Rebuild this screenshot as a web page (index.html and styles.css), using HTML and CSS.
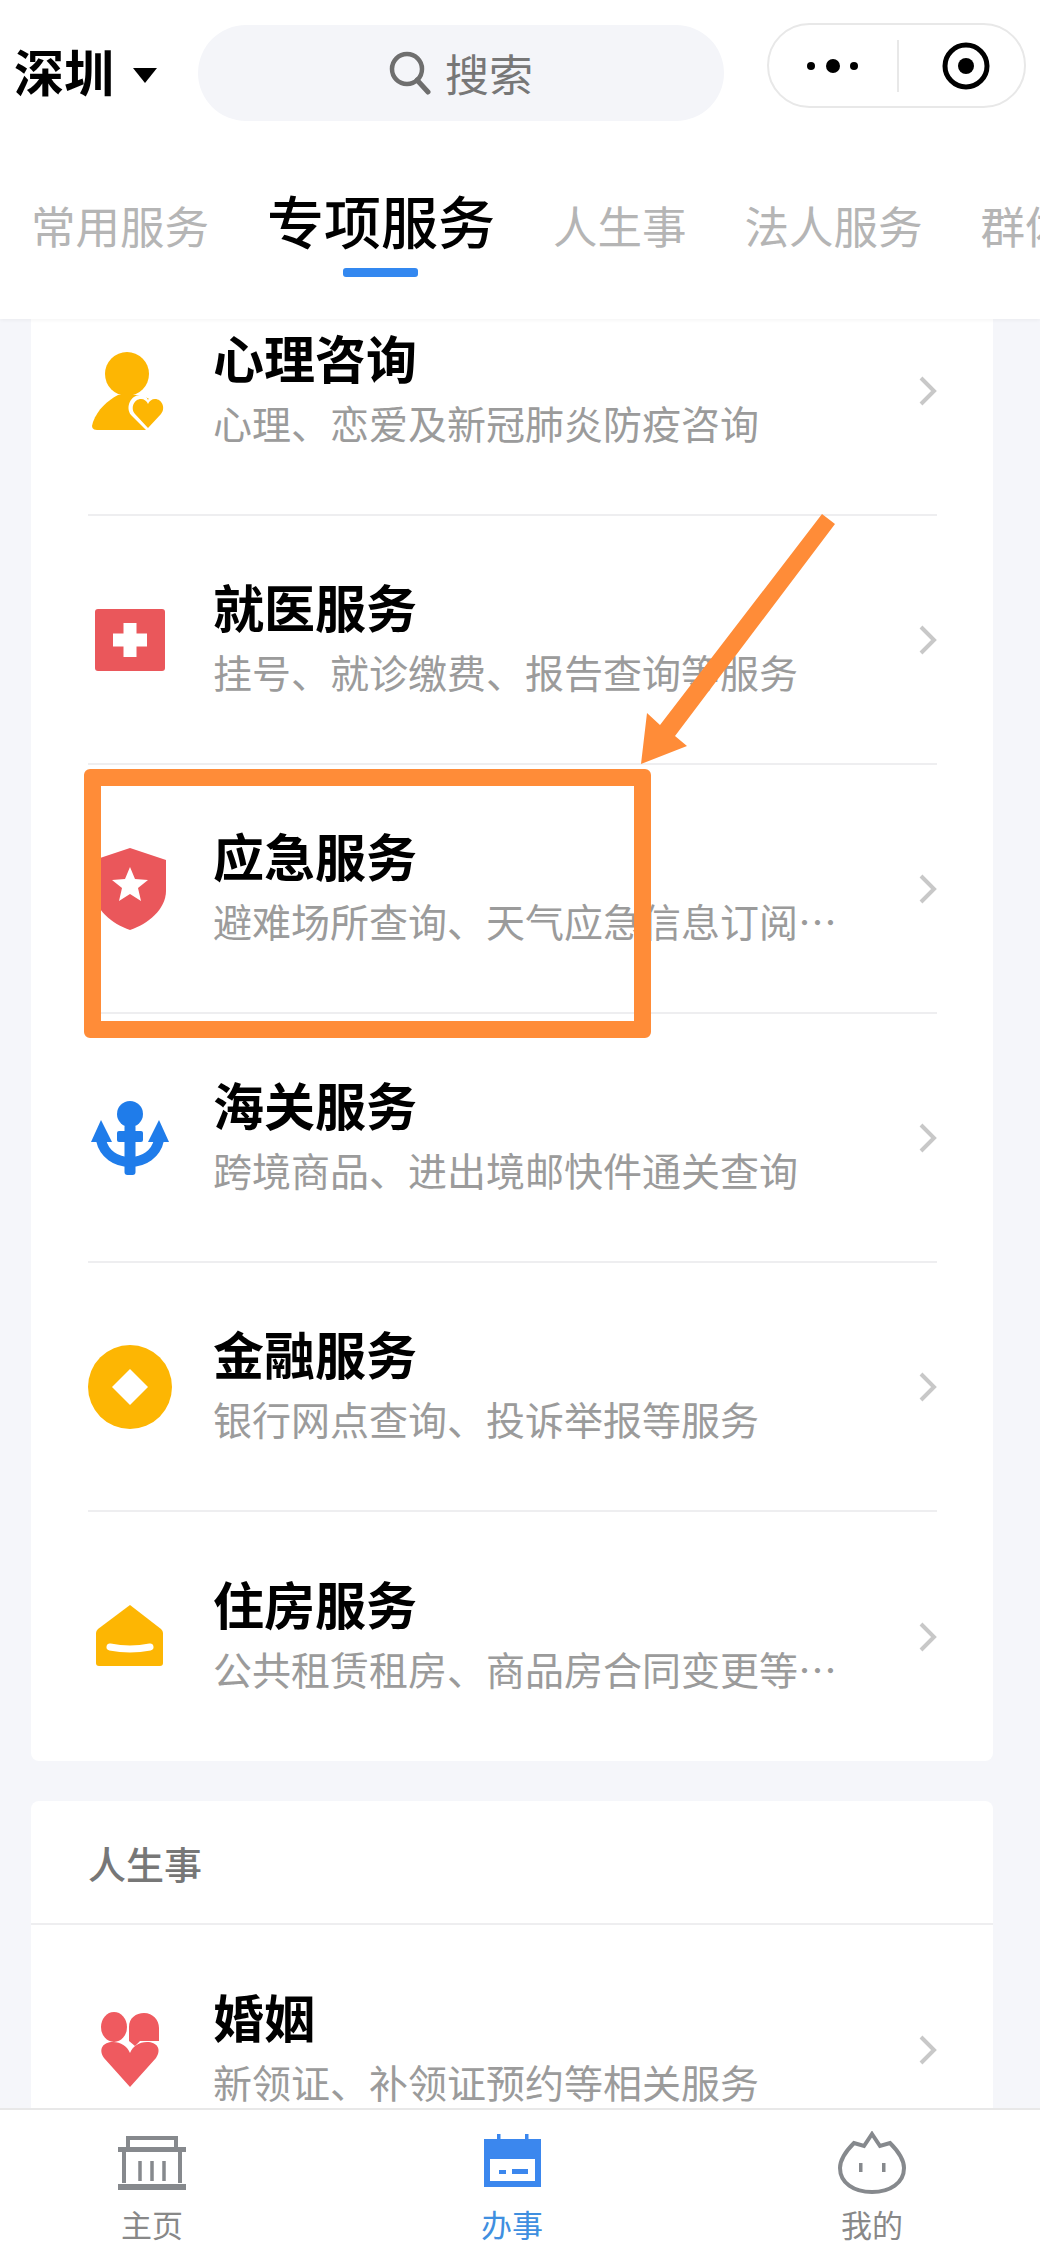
FILE: index.html
```html
<!DOCTYPE html>
<html lang="zh-CN">
<head>
  <meta charset="UTF-8" />
  <title>办事</title>
  <link rel="stylesheet" href="styles.css">
</head>
<body>
  <div class="page">
    <header class="header">
      <div class="top-row">
        <div class="city">深圳<span class="city-arrow"></span></div>
        <div class="search">
          <svg class="search-icon" viewBox="0 0 44 44" width="44" height="44">
            <circle cx="18" cy="18" r="15" fill="none" stroke="#6e6e6e" stroke-width="4.5"/>
            <line x1="28" y1="29" x2="39" y2="41" stroke="#6e6e6e" stroke-width="5" stroke-linecap="round"/>
          </svg>
          <span>搜索</span>
        </div>
        <div class="capsule">
          <svg class="capsule-dots" viewBox="0 0 56 16" width="56" height="16">
            <circle cx="6" cy="8" r="4"/>
            <circle cx="28" cy="8" r="7"/>
            <circle cx="49" cy="8" r="4"/>
          </svg>
          <span class="capsule-line"></span>
          <svg class="capsule-target" viewBox="0 0 48 48" width="48" height="48">
            <circle cx="24" cy="24" r="21" fill="none" stroke="#000" stroke-width="5"/>
            <circle cx="24" cy="24" r="8"/>
          </svg>
        </div>
      </div>
      <nav class="tabs">
        <span class="tab">常用服务</span>
        <span class="tab tab-active">专项服务</span>
        <span class="tab">人生事</span>
        <span class="tab">法人服务</span>
        <span class="tab">群体服务</span>
      </nav>
    </header>

    <main class="content">
      <section class="card card-first">
        <div class="row">
          <svg class="row-icon" viewBox="0 0 84 84">
            <circle cx="39" cy="25" r="22" fill="#fdb603"/>
            <path d="M9 81 Q2 81 5 73 C10 60 19 52 30 46 L50 46 C58 48 66 50 70 60 L58 81 Z" fill="#fdb603"/>
            <path d="M60 83 L43 66 C37 58 43 46 52 46 C56 46 59 48 60 51 C61 48 65 46 68 46 C77 46 83 58 77 66 Z" fill="#fff"/>
            <path d="M60 79 L47 65 C42 59 46 50 53 50 C56 50 59 52 60 55 C61 52 64 50 67 50 C74 50 78 59 73 65 Z" fill="#fdb603"/>
          </svg>
          <div class="row-text">
            <div class="row-title">心理咨询</div>
            <div class="row-sub">心理、恋爱及新冠肺炎防疫咨询</div>
          </div>
          <svg class="chevron" viewBox="0 0 18 30"><polyline points="2,2 15,15 2,28"/></svg>
        </div>
        <div class="row">
          <svg class="row-icon" viewBox="0 0 84 84">
            <rect x="7" y="11" width="70" height="62" rx="3" fill="#ea575b"/>
            <path d="M35.500 25 h13 v10.500 h10.500 v13 h-10.500 v10.500 h-13 v-10.500 h-10.500 v-13 h10.500 Z" fill="#fff"/>
          </svg>
          <div class="row-text">
            <div class="row-title">就医服务</div>
            <div class="row-sub">挂号、就诊缴费、报告查询等服务</div>
          </div>
          <svg class="chevron" viewBox="0 0 18 30"><polyline points="2,2 15,15 2,28"/></svg>
        </div>
        <div class="row">
          <svg class="row-icon" viewBox="0 0 84 84">
            <path d="M42 1 L78 13 V44 C78 62 60 77 42 83 C24 77 6 62 6 44 V13 Z" fill="#ea575b"/>
            <polygon points="42,20 47,32 60,33 50,41 53,54 42,47 31,54 34,41 24,33 37,32" fill="#fff"/>
          </svg>
          <div class="row-text">
            <div class="row-title">应急服务</div>
            <div class="row-sub">避难场所查询、天气应急信息订阅…</div>
          </div>
          <svg class="chevron" viewBox="0 0 18 30"><polyline points="2,2 15,15 2,28"/></svg>
        </div>
        <div class="row">
          <svg class="row-icon" viewBox="0 0 84 84">
            <circle cx="42" cy="18" r="13" fill="#1f7cea"/>
            <rect x="29" y="35" width="26" height="11" rx="2" fill="#1f7cea"/>
            <rect x="36.500" y="28" width="11" height="51" rx="3" fill="#1f7cea"/>
            <polygon points="13,24 24,46 3,46" fill="#1f7cea"/>
            <polygon points="71,24 81,46 60,46" fill="#1f7cea"/>
            <path d="M13 44 C16 58 28 66 42 66 C56 66 68 58 71 44" fill="none" stroke="#1f7cea" stroke-width="10"/>
          </svg>
          <div class="row-text">
            <div class="row-title">海关服务</div>
            <div class="row-sub">跨境商品、进出境邮快件通关查询</div>
          </div>
          <svg class="chevron" viewBox="0 0 18 30"><polyline points="2,2 15,15 2,28"/></svg>
        </div>
        <div class="row">
          <svg class="row-icon" viewBox="0 0 84 84">
            <circle cx="42" cy="42" r="42" fill="#fdb603"/>
            <polygon points="42,24 60,42 42,60 24,42" fill="#fff"/>
          </svg>
          <div class="row-text">
            <div class="row-title">金融服务</div>
            <div class="row-sub">银行网点查询、投诉举报等服务</div>
          </div>
          <svg class="chevron" viewBox="0 0 18 30"><polyline points="2,2 15,15 2,28"/></svg>
        </div>
        <div class="row row-last">
          <svg class="row-icon" viewBox="0 0 84 84">
            <path d="M42 10 L73 34 Q75 36 75 38 V68 Q75 71 72 71 H11 Q8 71 8 68 V38 Q8 36 10 34 Z" fill="#fdb603"/>
            <path d="M22 52 Q42 56 62 52" fill="none" stroke="#fff" stroke-width="7" stroke-linecap="round"/>
          </svg>
          <div class="row-text">
            <div class="row-title">住房服务</div>
            <div class="row-sub">公共租赁租房、商品房合同变更等…</div>
          </div>
          <svg class="chevron" viewBox="0 0 18 30"><polyline points="2,2 15,15 2,28"/></svg>
        </div>
      </section>

      <section class="card">
        <div class="card-title">人生事</div>
        <div class="row row-last">
          <svg class="row-icon" viewBox="0 0 84 84">
            <ellipse cx="26" cy="19" rx="13" ry="15" fill="#ef5a5f"/>
            <path d="M41 33 V19 C41 10 48 5 56 5 C65 5 71 12 71 20 V33 H52 L47 38 Z" fill="#ef5a5f"/>
            <path d="M42 79 L16 50 C10 41 15 34 25 34 C33 34 39 38 42 45 C45 38 51 34 59 34 C69 34 74 41 68 50 Z" fill="#ef5a5f"/>
          </svg>
          <div class="row-text">
            <div class="row-title">婚姻</div>
            <div class="row-sub">新领证、补领证预约等相关服务</div>
          </div>
          <svg class="chevron" viewBox="0 0 18 30"><polyline points="2,2 15,15 2,28"/></svg>
        </div>
      </section>
    </main>

    <footer class="tabbar">
      <div class="tabbar-item">
        <svg class="tabbar-icon" viewBox="0 0 68 64" width="68" height="64">
          <g fill="none" stroke="#86898d" stroke-width="4">
            <path d="M10 17 V7 H58 V17"/>
            <path d="M6 20 V52"/>
            <path d="M62 20 V52"/>
          </g>
          <g fill="none" stroke="#86898d" stroke-width="3.500">
            <path d="M22 30 V50"/>
            <path d="M34 30 V50"/>
            <path d="M46 30 V50"/>
          </g>
          <rect x="0" y="16" width="68" height="5" fill="#86898d"/>
          <rect x="0" y="53" width="68" height="6" fill="#86898d"/>
        </svg>
        <span>主页</span>
      </div>
      <div class="tabbar-item tabbar-active">
        <svg class="tabbar-icon" viewBox="0 0 57 64" width="57" height="64">
          <rect x="0" y="8" width="57" height="48" fill="#3b87ee"/>
          <rect x="13" y="3" width="3.500" height="7" fill="#3b87ee"/>
          <rect x="41" y="3" width="3.500" height="7" fill="#3b87ee"/>
          <rect x="6" y="28" width="45" height="22" fill="#fff"/>
          <rect x="15" y="39" width="7" height="4" fill="#3b87ee"/>
          <rect x="28" y="38" width="16" height="5" fill="#3b87ee"/>
        </svg>
        <span>办事</span>
      </div>
      <div class="tabbar-item">
        <svg class="tabbar-icon" viewBox="0 0 68 64" width="68" height="64">
          <path d="M34 3 L42 15 L52 12 C60 20 66 29 66 37 C66 52 52 61 34 61 C16 61 2 52 2 37 C2 29 8 20 16 12 L26 15 Z" fill="none" stroke="#86898d" stroke-width="4"/>
          <rect x="21" y="32" width="3.500" height="9" fill="#86898d"/>
          <rect x="44" y="32" width="3.500" height="9" fill="#86898d"/>
        </svg>
        <span>我的</span>
      </div>
    </footer>

    <!-- annotation drawn over the screenshot -->
    <div class="mark-box"></div>
    <svg class="mark-arrow" viewBox="0 0 220 270" width="220" height="270">
      <polygon points="11,259 17,208 30,220 192,9 205,19 45,231 57,241" fill="#ff8c38"/>
    </svg>
  </div>
</body>
</html>
```

FILE: styles.css
```css
* {
  box-sizing: border-box;
}

body {
  margin: 0;
  font-family: "Noto Sans CJK SC", "Noto Sans", sans-serif;
  background-color: #f5f6fa;
  color: #000;
}

.page {
  position: relative;
  display: flex;
  flex-direction: column;
  width: 1040px;
  height: 2254px;
  overflow: hidden;
}

/* header */
.header {
  position: relative;
  z-index: 2;
  flex: none;
  height: 319px;
  background-color: #fff;
  box-shadow: 0 1px 4px rgba(0, 0, 0, 0.05);
}

.top-row {
  display: flex;
  align-items: flex-start;
  padding: 23px 14px 0 14px;
}

.city {
  display: flex;
  align-items: center;
  width: 184px;
  height: 94px;
  font-size: 50px;
  font-weight: 700;
  line-height: 94px;
}

.city-arrow {
  width: 0;
  height: 0;
  margin: 10px 0 0 19px;
  border-left: 12px solid transparent;
  border-right: 12px solid transparent;
  border-top: 15px solid #000;
}

.search {
  display: flex;
  align-items: center;
  justify-content: center;
  gap: 12px;
  width: 526px;
  height: 96px;
  margin-top: 2px;
  border-radius: 48px;
  background-color: #f4f5f9;
  color: #777;
  font-size: 44px;
}

.capsule {
  display: flex;
  align-items: center;
  width: 259px;
  height: 85px;
  margin-left: 43px;
  border: 2px solid #e8e8e8;
  border-radius: 43px;
  background-color: #fff;
}

.capsule-dots {
  margin-left: 36px;
}

.capsule-line {
  width: 2px;
  height: 52px;
  margin-left: 36px;
  background-color: #e8e8e8;
}

.capsule-target {
  margin-left: 43px;
}

.tabs {
  display: flex;
  align-items: baseline;
  gap: 58px;
  padding: 60px 0 30px 31px;
  overflow: hidden;
  white-space: nowrap;
  color: #b5b5b5;
  font-size: 44.5px;
  line-height: 76px;
}

.tab {
  flex: none;
}

.tab-active {
  position: relative;
  color: #000;
  font-size: 57px;
  font-weight: 500;
}

.tab-active::after {
  content: "";
  position: absolute;
  left: 76px;
  bottom: -20px;
  width: 75px;
  height: 9px;
  border-radius: 3px;
  background-color: #3388f0;
}

/* list */
.content {
  flex: 1;
  min-height: 0;
  overflow: hidden;
}

.card {
  width: 962px;
  margin: 0 0 40px 31px;
  border-radius: 8px;
  background-color: #fff;
}

.card-first {
  margin-top: -52px;
}

.card-title {
  height: 124px;
  padding: 42px 0 0 57px;
  border-bottom: 2px solid #eeeef0;
  color: #777;
  font-size: 38px;
  font-weight: 500;
  line-height: 40px;
}

.row {
  display: flex;
  align-items: center;
  height: 249px;
  margin: 0 56px 0 57px;
  border-bottom: 2px solid #eeeef0;
}

.row-last {
  border-bottom: none;
}

.row-icon {
  flex: none;
  width: 84px;
  height: 84px;
}

.row-text {
  flex: 1;
  min-width: 0;
  margin-left: 41px;
  padding-bottom: 5px;
}

.row-title {
  font-size: 51px;
  font-weight: 700;
  line-height: 68px;
}

.row-sub {
  color: #9b9b9b;
  font-size: 39px;
  line-height: 62px;
  white-space: nowrap;
}

.chevron {
  flex: none;
  width: 18px;
  height: 30px;
}

.chevron polyline {
  fill: none;
  stroke: #c8c8c8;
  stroke-width: 4;
}

/* bottom bar */
.tabbar {
  position: relative;
  z-index: 2;
  flex: none;
  display: flex;
  justify-content: space-between;
  height: 146px;
  padding: 21px 108px 0 92px;
  border-top: 2px solid #e8e8e8;
  background-color: #fff;
}

.tabbar-item {
  display: flex;
  flex-direction: column;
  align-items: center;
  width: 120px;
  color: #888;
  font-size: 31px;
  line-height: 38px;
}

.tabbar-icon {
  margin-bottom: 10px;
}

.tabbar-active {
  color: #3f8fe0;
}

/* orange annotation */
.mark-box {
  position: absolute;
  z-index: 3;
  left: 84px;
  top: 769px;
  width: 567px;
  height: 269px;
  border: 17px solid #ff8c38;
  border-radius: 6px;
}

.mark-arrow {
  position: absolute;
  z-index: 3;
  left: 630px;
  top: 505px;
}
```
